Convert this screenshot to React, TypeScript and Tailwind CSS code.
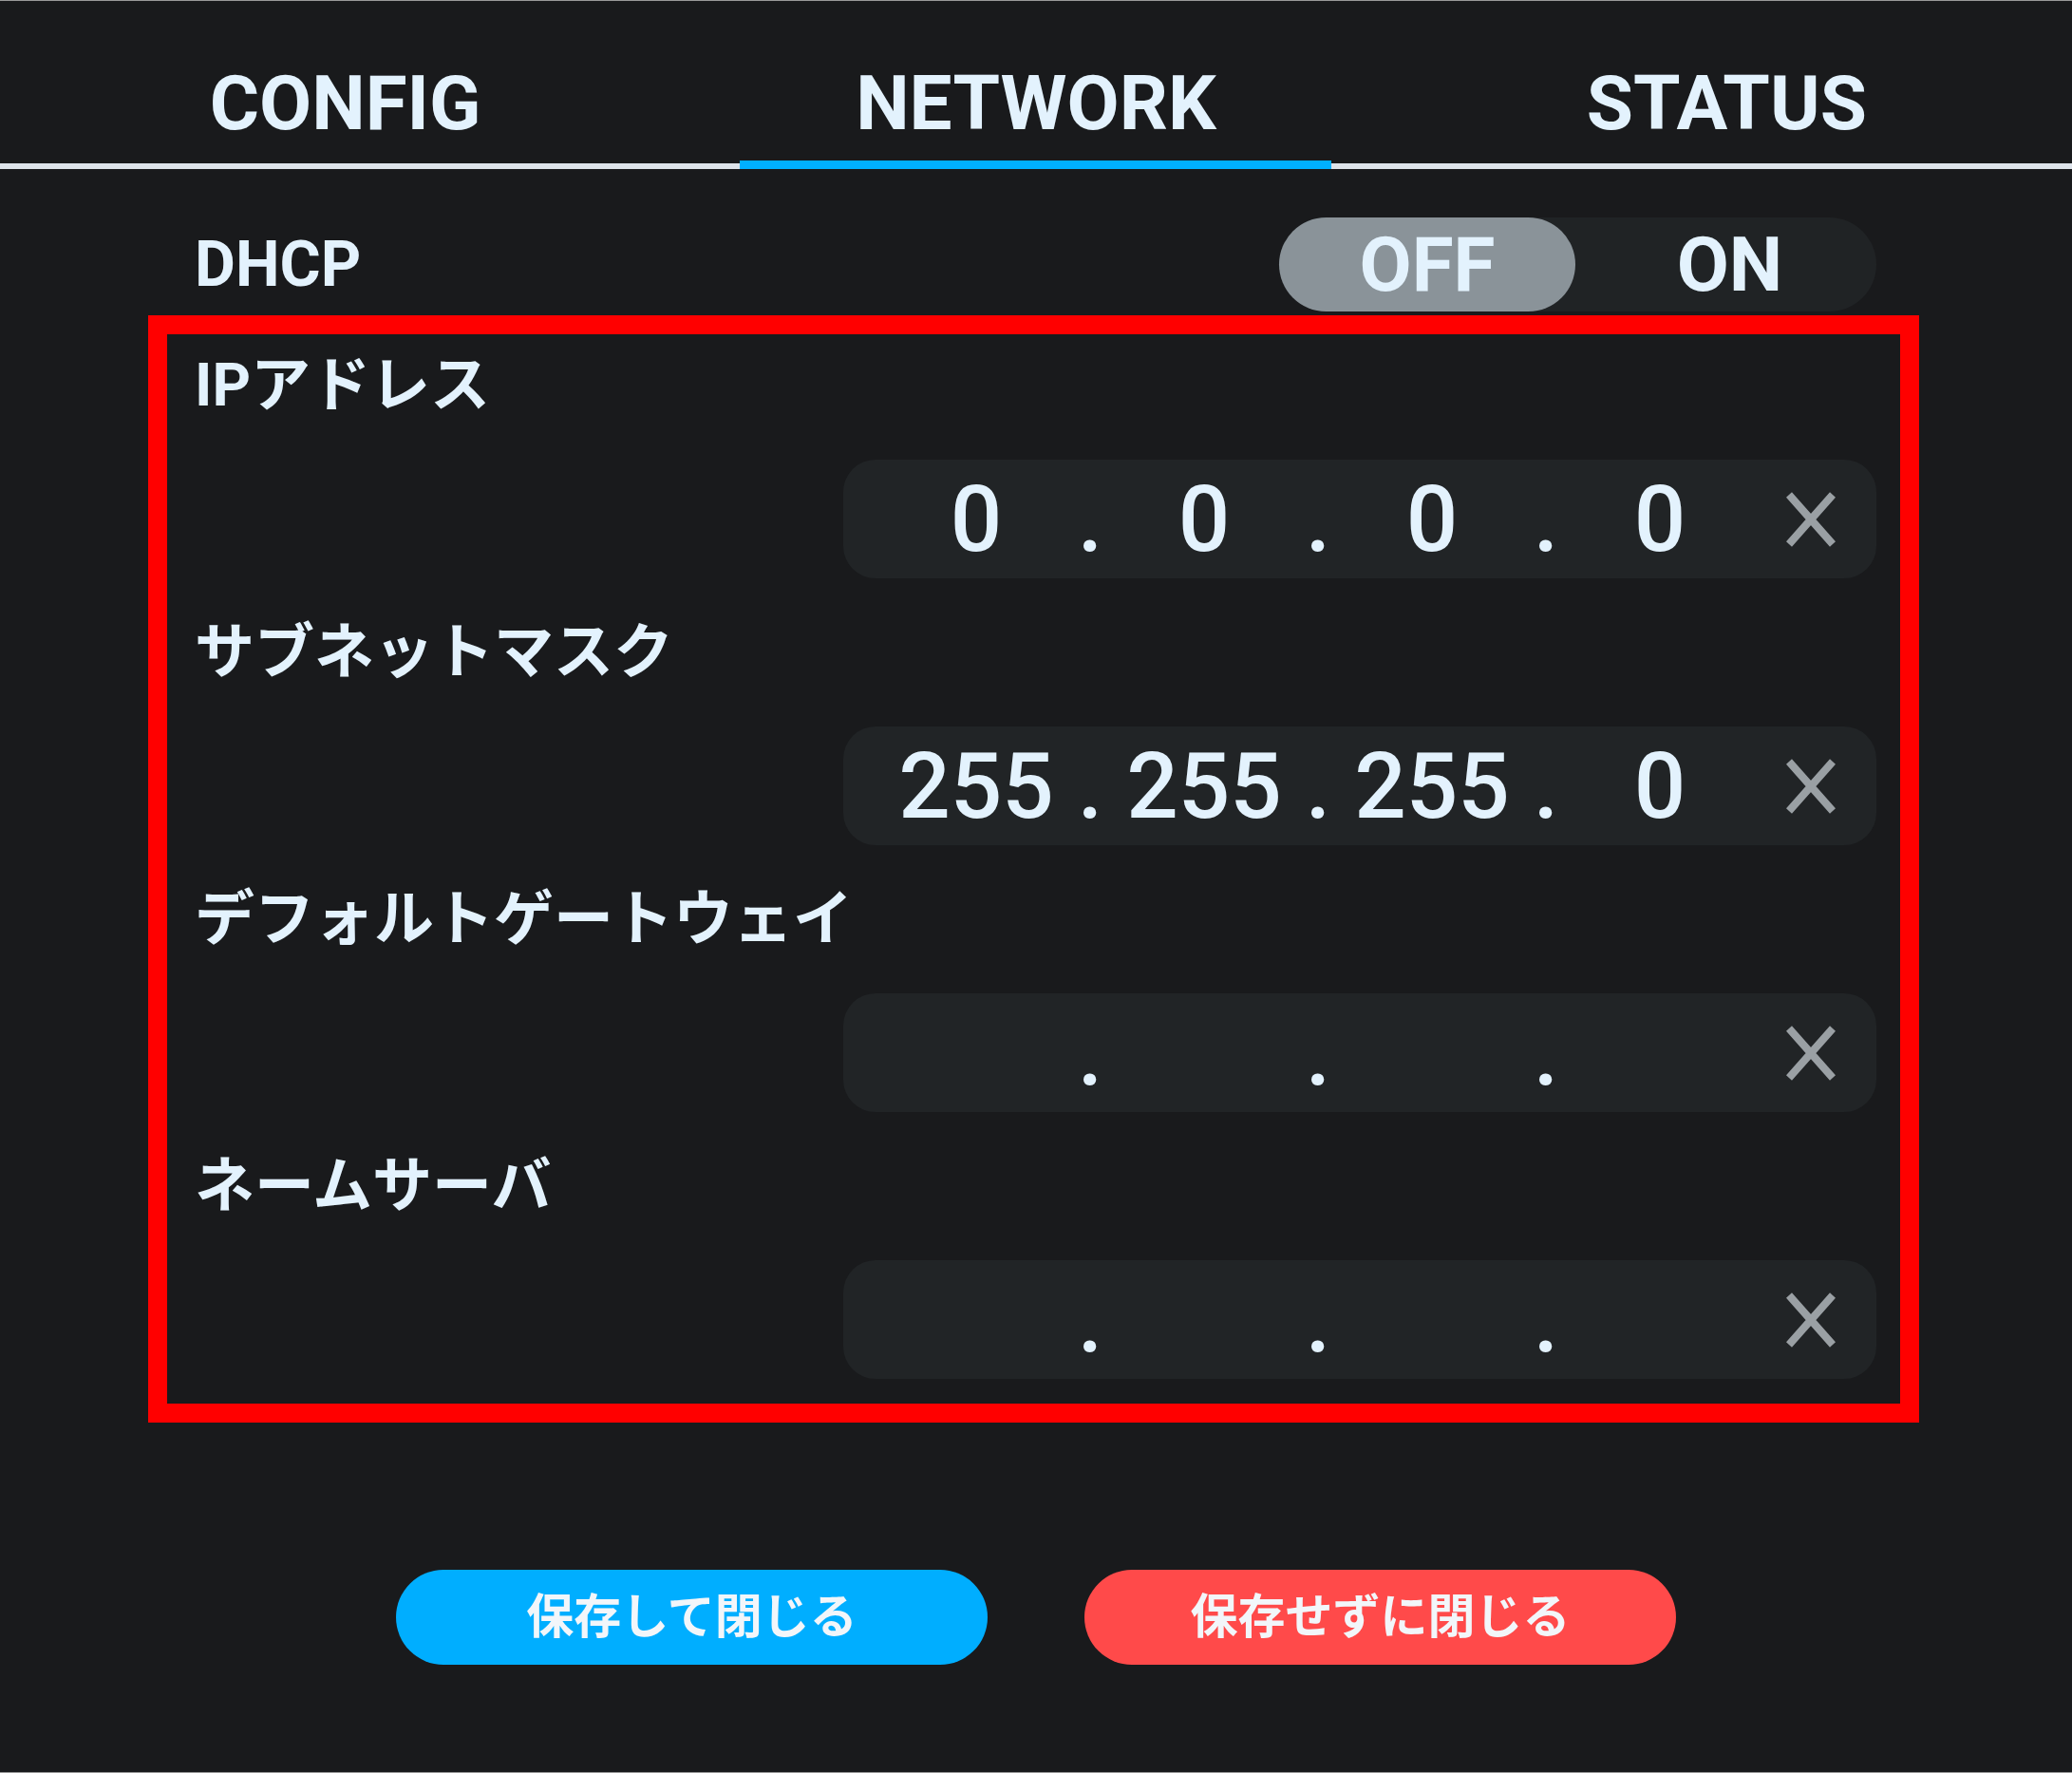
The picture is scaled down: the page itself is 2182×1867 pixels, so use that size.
const tabs = ["CONFIG", "NETWORK", "STATUS"];

const fields: { label: string; octets: string[] }[] = [
  { label: "IPアドレス", octets: ["0", "0", "0", "0"] },
  { label: "サブネットマスク", octets: ["255", "255", "255", "0"] },
  { label: "デフォルトゲートウェイ", octets: ["", "", "", ""] },
  { label: "ネームサーバ", octets: ["", "", "", ""] },
];

function ClearIcon() {
  return (
    <svg viewBox="0 0 58 58" className="ml-[35px] h-[58px] w-[58px] text-[#9aa0a4]">
      <path d="M6 3 L52 55 M52 3 L6 55" stroke="currentColor" strokeWidth="8" fill="none" />
    </svg>
  );
}

function IpInput({ octets }: { octets: string[] }) {
  return (
    <div className="ml-auto flex h-[125px] w-[1088px] items-center rounded-[34px] bg-[#212426] pl-[45px] pr-[40px] text-[96px] font-medium leading-[96px] text-[#e3f2fd]">
      {octets.map((o, i) => (
        <div key={i} className="flex items-center">
          {i > 0 && <span className="w-[50px] text-center">.</span>}
          <span className="w-[190px] text-center">{o}</span>
        </div>
      ))}
      <ClearIcon />
    </div>
  );
}

export default function App() {
  return (
    <div className="flex h-[1867px] w-[2182px] flex-col border-y border-[#9a9a9a] bg-[#191a1c] font-[Roboto,'Noto_Sans_CJK_JP',sans-serif] text-[#e3f2fd]">
      {/* tabs */}
      <div className="grid grid-cols-3 border-b-[6px] border-[#dde3ea]">
        {tabs.map((t) => (
          <div
            key={t}
            className="relative h-[171px] pt-[63px] text-center text-[80px] font-bold leading-[90px]"
          >
            {t}
            {t === "NETWORK" && (
              <div className="absolute bottom-[-6px] left-[52px] right-[53px] h-[9px] bg-[#00b0ff]" />
            )}
          </div>
        ))}
      </div>

      {/* DHCP */}
      <div className="ml-[205px] mt-[51px] flex h-[99px] w-[1771px] items-center justify-between">
        <span className="text-[66px] font-bold">DHCP</span>
        <div className="flex h-[99px] w-[629px] rounded-full bg-[#202325] text-[80px] font-bold">
          <div className="flex w-[312px] items-center justify-center rounded-full bg-[#8a9399]">OFF</div>
          <div className="flex flex-1 items-center justify-center pl-[8px]">ON</div>
        </div>
      </div>

      {/* fields */}
      <div className="ml-[156px] mt-[4px] flex w-[1865px] flex-col gap-[34px] border-[20px] border-[#ff0000] pb-[26px] pl-[29px] pr-[25px] pt-[10px]">
        {fields.map((f) => (
          <div key={f.label} className="flex flex-col gap-[34px]">
            <div className="h-[88px] text-[63px] font-bold leading-[88px]">{f.label}</div>
            <IpInput octets={f.octets} />
          </div>
        ))}
      </div>

      {/* buttons */}
      <div className="mt-[155px] flex justify-center gap-[102px] text-[50px] font-bold text-[#f2f6fa]">
        <button className="h-[100px] w-[623px] rounded-full bg-[#00aeff]">保存して閉じる</button>
        <button className="h-[100px] w-[623px] rounded-full bg-[#ff4a4a]">保存せずに閉じる</button>
      </div>
    </div>
  );
}
